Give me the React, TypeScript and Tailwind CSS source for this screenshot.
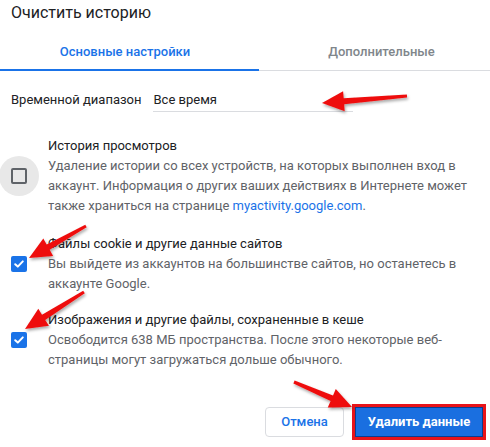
import React from "react";

type Pt = [number, number];

function arrowPoints(tail: Pt, tip: Pt, headLen = 22, headW = 20, tailW = 3, neckW = 6): string {
  const [x1, y1] = tail;
  const [x2, y2] = tip;
  const dx = x2 - x1;
  const dy = y2 - y1;
  const len = Math.hypot(dx, dy);
  const ux = dx / len;
  const uy = dy / len;
  const nx = -uy;
  const ny = ux;
  const bx = x2 - ux * headLen;
  const by = y2 - uy * headLen;
  const pts: Pt[] = [
    [x1 + (nx * tailW) / 2, y1 + (ny * tailW) / 2],
    [bx + (nx * neckW) / 2, by + (ny * neckW) / 2],
    [bx + (nx * headW) / 2, by + (ny * headW) / 2],
    [x2, y2],
    [bx - (nx * headW) / 2, by - (ny * headW) / 2],
    [bx - (nx * neckW) / 2, by - (ny * neckW) / 2],
    [x1 - (nx * tailW) / 2, y1 - (ny * tailW) / 2],
  ];
  return pts.map((p) => `${p[0].toFixed(1)},${p[1].toFixed(1)}`).join(" ");
}

function Checked() {
  return (
    <div className="w-[16px] h-[16px] rounded-[2px] bg-[#1a73e8] flex items-center justify-center shrink-0">
      <svg width="12" height="12" viewBox="0 0 12 12">
        <path d="M2.2 6.2 L4.8 8.6 L9.8 3.4" fill="none" stroke="white" strokeWidth="2" strokeLinecap="round" strokeLinejoin="round" />
      </svg>
    </div>
  );
}

export default function App() {
  const arrows: [Pt, Pt][] = [
    [[407, 96], [322, 103]],
    [[86, 226], [29, 258]],
    [[84, 292], [25, 329]],
    [[294, 382], [352, 407]],
  ];
  return (
    <div
      className="relative w-[490px] h-[447px] bg-white overflow-hidden text-[13px] leading-[20px] text-[#202124]"
      style={{ fontFamily: "Roboto, 'Noto Sans', sans-serif" }}
    >
      <div className="pl-[11px] pt-[3px] text-[16px] leading-[20px] text-[#202124]">Очистить историю</div>

      <div className="mt-[19px] flex border-b border-[#dadce0]">
        <div className="w-[259px] pr-[9px] text-center font-medium text-[#1a73e8] pb-[7px] border-b-2 border-[#1a73e8] -mb-[1px]">
          Основные настройки
        </div>
        <div className="flex-1 pl-[14px] text-center font-medium text-[#80868b] pb-[8px]">Дополнительные</div>
      </div>

      <div className="mt-[19px] flex items-start pl-[11px]">
        <div className="text-[#202124]">Временной диапазон</div>
        <div className="ml-[12px] w-[200px] border-b border-[#dadce0] pb-[1px] text-[#202124]">Все время</div>
      </div>

      <div className="mt-[24px] flex items-center">
        <div className="w-[48px] shrink-0 relative h-[40px] flex items-center">
          <div className="absolute left-[-1px] top-0 w-[40px] h-[40px] rounded-full bg-[#e8e8e8]" />
          <div className="relative ml-[11px] w-[16px] h-[16px] rounded-[2px] border-2 border-[#5f6368]" />
        </div>
        <div>
          <div className="text-[#202124]">История просмотров</div>
          <div className="text-[#5f6368]">
            Удаление истории со всех устройств, на которых выполнен вход в<br />
            аккаунт. Информация о других ваших действиях в Интернете может<br />
            также храниться на странице <span className="text-[#1a73e8]">myactivity.google.com</span>.
          </div>
        </div>
      </div>

      <div className="mt-[18px] flex items-center">
        <div className="w-[48px] shrink-0 pl-[11px]">
          <Checked />
        </div>
        <div>
          <div className="text-[#202124]">Файлы cookie и другие данные сайтов</div>
          <div className="text-[#5f6368]">
            Вы выйдете из аккаунтов на большинстве сайтов, но останетесь в<br />
            аккаунте Google.
          </div>
        </div>
      </div>

      <div className="mt-[16px] flex items-center">
        <div className="w-[48px] shrink-0 pl-[11px]">
          <Checked />
        </div>
        <div>
          <div className="text-[#202124]">Изображения и другие файлы, сохраненные в кеше</div>
          <div className="text-[#5f6368]">
            Освободится 638 МБ пространства. После этого некоторые веб-<br />
            страницы могут загружаться дольше обычного.
          </div>
        </div>
      </div>

      <div className="mt-[34px] flex justify-end items-center gap-[8px] pr-[4px]">
        <div className="w-[79px] h-[30px] rounded-[4px] border border-[#dadce0] flex items-center justify-center font-medium text-[#1a73e8]">
          Отмена
        </div>
        <div className="w-[134px] h-[36px] border-[3px] border-[#e8141a] bg-[#b3121a] p-0">
          <div className="w-full h-full bg-[#1a6fe0] border border-[#0b3d91] flex items-center justify-center font-bold text-white">
            Удалить данные
          </div>
        </div>
      </div>

      <svg className="absolute inset-0 pointer-events-none" width="490" height="447">
        <defs>
          <filter id="sh" x="-20%" y="-20%" width="140%" height="140%">
            <feDropShadow dx="1" dy="2" stdDeviation="1.5" floodColor="#000" floodOpacity="0.35" />
          </filter>
        </defs>
        {arrows.map(([t, h], i) => (
          <polygon key={i} points={arrowPoints(t, h)} fill="#ee1111" filter="url(#sh)" />
        ))}
      </svg>
    </div>
  );
}
